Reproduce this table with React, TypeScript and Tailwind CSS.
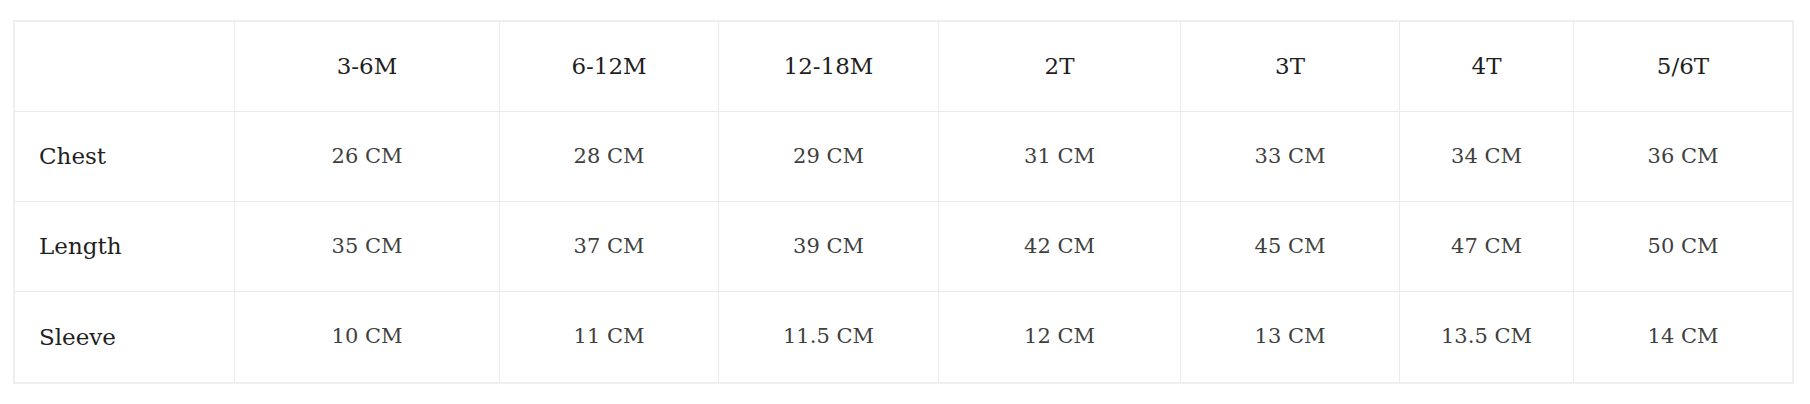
import React from "react";

const sizes = ["3-6M", "6-12M", "12-18M", "2T", "3T", "4T", "5/6T"];

const rows: { label: string; values: string[] }[] = [
  { label: "Chest", values: ["26 CM", "28 CM", "29 CM", "31 CM", "33 CM", "34 CM", "36 CM"] },
  { label: "Length", values: ["35 CM", "37 CM", "39 CM", "42 CM", "45 CM", "47 CM", "50 CM"] },
  { label: "Sleeve", values: ["10 CM", "11 CM", "11.5 CM", "12 CM", "13 CM", "13.5 CM", "14 CM"] },
];

const SizeChart: React.FC = () => {
  return (
    <div className="bg-white w-[1810px] h-[404px] pt-[20px] pl-[13px] font-['DejaVu_Serif',serif]">
      <div className="w-[1781px] border-2 border-[#efefef] grid grid-cols-[220px_265px_219px_220px_242px_219px_174px_218px]">
        {/* header row */}
        <div className="h-[90px] border-r border-b border-[#ececec]"></div>
        {sizes.map((s, i) => (
          <div
            key={s}
            className={
              "h-[90px] flex items-center justify-center border-b border-[#ececec] text-[23px] text-[#1f1f1f] " +
              (i < sizes.length - 1 ? "border-r" : "")
            }
          >
            {s}
          </div>
        ))}

        {rows.map((row, r) => (
          <React.Fragment key={row.label}>
            <div
              className={
                "h-[90px] flex items-center pl-[24px] border-r border-[#ececec] text-[23px] text-[#1f1f1f] " +
                (r < rows.length - 1 ? "border-b" : "")
              }
            >
              {row.label}
            </div>
            {row.values.map((v, i) => (
              <div
                key={i}
                className={
                  "h-[90px] flex items-center justify-center border-[#ececec] text-[21px] font-light text-[#3f3f3f] " +
                  (i < row.values.length - 1 ? "border-r " : "") +
                  (r < rows.length - 1 ? "border-b" : "")
                }
              >
                {v}
              </div>
            ))}
          </React.Fragment>
        ))}
      </div>
    </div>
  );
};

export default function App() {
  return <SizeChart />;
}
